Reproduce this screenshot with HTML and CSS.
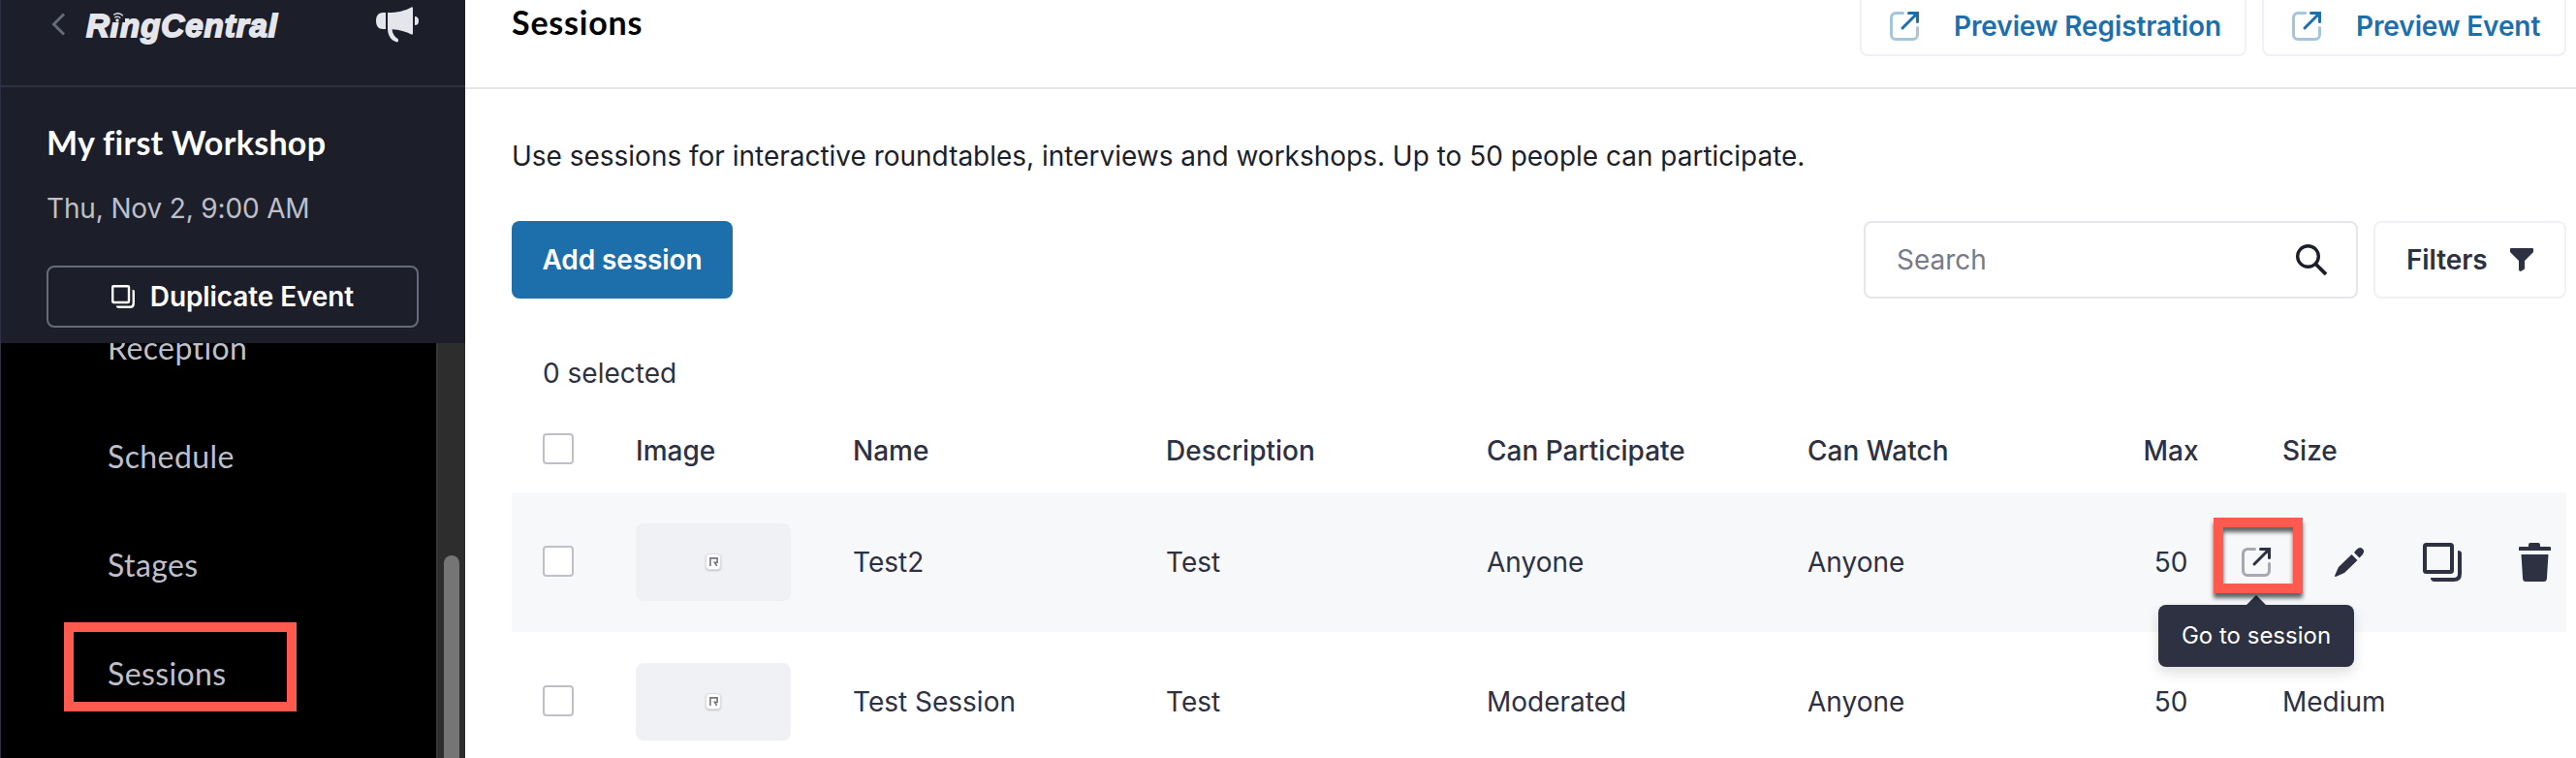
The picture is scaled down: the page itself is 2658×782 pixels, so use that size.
FILE: index.html
```
<!DOCTYPE html>
<html lang="en">
<head>
<meta charset="utf-8">
<title>Sessions</title>
<link rel="stylesheet" href="styles.css">
</head>
<body>
<svg class="defs" width="0" height="0" aria-hidden="true">
  <symbol id="external" viewBox="0 0 30 30">
    <path d="M13.500 1.500H6A4.500 4.500 0 0 0 1.500 6v18A4.500 4.500 0 0 0 6 28.500h18a4.500 4.500 0 0 0 4.500-4.500v-7.500" fill="none" stroke="currentColor" stroke-width="3" stroke-linecap="round" opacity=".4"/>
    <path d="M13 17 27 3" fill="none" stroke="currentColor" stroke-width="3" stroke-linecap="round"/>
    <path d="M19.500 0H30v10.500a1.500 1.500 0 0 1-3 0V6l-3-3h-4.500a1.500 1.500 0 0 1 0-3Z" fill="currentColor"/>
  </symbol>
  <symbol id="copy" viewBox="0 0 40 40">
    <rect x="2" y="2" width="28" height="28" rx="1.500" fill="none" stroke="currentColor" stroke-width="4"/>
    <path d="M36 8q4 0 4 3v21q0 8-8 8H12q-4 0-4-4h24q4 0 4-4Z" fill="currentColor"/>
  </symbol>
</svg>
<div class="app">
  <aside class="sidebar">
    <div class="brand">
      <svg class="back" viewBox="0 0 16 24"><path d="M14 1.500 3.500 12 14 22.500" fill="none" stroke="currentColor" stroke-width="3"/></svg>
      <div class="logo">RingCentral
        <svg class="waves" viewBox="0 0 14 11"><path d="M1 0h13v11H0Z" fill="#1c1f2a"/><circle cx="6" cy="9" r="1.700" fill="#e5e6eb"/><path d="M3.300 6.300q3.200-2.500 6 .4M2.300 3.400q5-3.600 9.600.8" fill="none" stroke="#e5e6eb" stroke-width="1.300"/></svg>
      </div>
      <svg class="horn" viewBox="0 0 44 37"><path d="M10 6v17H7C2.500 23 0 19.500 0 14.500S2.500 6 7 6ZM12 6c10 0 18-2 24.500-5.600Q38 0 38 1.500v26q0 1.500-1.500 1C31 26 24 23.500 16.500 23.300 17 28 19 31 22.500 33q1.500 3-1 3.500C15 34.500 12 29 12 22ZM40 10q4 0 4 4.500T40 19Z" fill="currentColor"/></svg>
    </div>
    <div class="event">
      <h2 class="event-name">My first Workshop</h2>
      <p class="event-date">Thu, Nov 2, 9:00 AM</p>
      <button class="duplicate"><svg class="dup-icon"><use href="#copy"/></svg><span>Duplicate Event</span></button>
    </div>
    <div class="menu">
      <nav class="menu-list">
        <a>Reception</a>
        <a>Schedule</a>
        <a>Stages</a>
        <a class="current">Sessions</a>
      </nav>
      <div class="track"><div class="thumb"></div></div>
    </div>
  </aside>
  <main class="main">
    <header class="topbar">
      <h1 class="title">Sessions</h1>
      <div class="previews">
        <button class="preview registration"><svg><use href="#external"/></svg><span>Preview Registration</span></button>
        <button class="preview"><svg><use href="#external"/></svg><span>Preview Event</span></button>
      </div>
    </header>
    <p class="intro">Use sessions for interactive roundtables, interviews and workshops. Up to 50 people can participate.</p>
    <div class="toolbar">
      <button class="add">Add session</button>
      <div class="search"><span>Search</span>
        <svg viewBox="0 0 32 32"><circle cx="12.500" cy="12.500" r="10.800" fill="none" stroke="currentColor" stroke-width="3.400"/><path d="M20 20l11 11" stroke="currentColor" stroke-width="3.800"/></svg>
      </div>
      <button class="filters"><span>Filters</span>
        <svg viewBox="0 0 24 24"><path d="M1 0h22q1 0 1 1v3L15 13v8.500L11 24q-2 0-2-2v-9L0 4V1q0-1 1-1Z" fill="currentColor"/></svg>
      </button>
    </div>
    <p class="selected">0 selected</p>
    <section class="table">
      <div class="row head">
        <i class="box"></i><span>Image</span><span>Name</span><span>Description</span><span>Can Participate</span><span>Can Watch</span><span class="max">Max</span><span>Size</span>
      </div>
      <div class="row hover">
        <i class="box"></i>
        <div class="image"><span class="chip"><svg viewBox="0 0 10 10"><path d="M1 10V1h8v5H6l2.500 4" fill="none" stroke="currentColor" stroke-width="1.800"/></svg></span></div>
        <span>Test2</span><span>Test</span><span>Anyone</span><span>Anyone</span><span class="max">50</span>
        <div class="actions">
          <div class="go">
            <svg class="go-icon"><use href="#external"/></svg>
            <div class="mark"></div>
            <div class="tooltip">Go to session</div>
          </div>
          <svg class="pencil" viewBox="0 0 30 30"><path d="M17.500 7l6 6L10 26 1 30q-1 0-1-1l4-9ZM20 5l2.500-3q3.500-3.300 6.300-.8t-.3 6.300L25.500 10.500Z" fill="currentColor"/></svg>
          <svg class="copy"><use href="#copy"/></svg>
          <svg class="trash" viewBox="0 0 33 40"><path d="M1 4h9V2q0-2 2-2h8q2 0 2 2v2h10q1 0 1 1v3H0V5q0-1 1-1ZM2.500 12h28l-1.600 25q-.2 3-3 3H7.100q-2.800 0-3-3Z" fill="currentColor"/></svg>
        </div>
      </div>
      <div class="row">
        <i class="box"></i>
        <div class="image"><span class="chip"><svg viewBox="0 0 10 10"><path d="M1 10V1h8v5H6l2.500 4" fill="none" stroke="currentColor" stroke-width="1.800"/></svg></span></div>
        <span>Test Session</span><span>Test</span><span>Moderated</span><span>Anyone</span><span class="max">50</span><span>Medium</span>
      </div>
    </section>
  </main>
</div>
</body>
</html>
```
FILE: styles.css
```
* { box-sizing: border-box; }
body { margin: 0; background: #fff; color: #2d3142; font: 28px/40px Inter, "Liberation Sans", sans-serif; overflow: hidden; }
h1, h2, p { margin: 0; }
button { font: inherit; margin: 0; background: none; cursor: pointer; letter-spacing: -.1px; }
svg { display: block; flex: none; }
.defs { position: absolute; }
.app { display: flex; width: 2658px; height: 782px; overflow: hidden; }

.sidebar { display: flex; flex-direction: column; flex: none; width: 480px; background: #1c1f2a; color: #fff; border-left: 1px solid #2d3142; }
.brand { display: flex; align-items: flex-start; height: 90px; padding: 0 48px 0 51px; border-bottom: 2px solid #2d3142; color: #e5e6eb; }
.back { width: 16px; height: 24px; margin-top: 13px; color: #676a7b; }
.logo { position: relative; margin: 7px 0 0 21px; font: italic 700 33px/40px "Liberation Sans", sans-serif; letter-spacing: 1px; -webkit-text-stroke: 1.800px #e5e6eb; }
.waves { position: absolute; left: 26px; top: 5px; width: 14px; height: 11px; }
.horn { width: 44px; height: 37px; margin: 7px 0 0 auto; }
.event { height: 264px; padding: 35px 48px 0 47px; }
.event-name { font: 700 34px/44px Lato, sans-serif; letter-spacing: .3px; }
.event-date { margin-top: 26px; color: #bfbfc9; letter-spacing: -.15px; }
.duplicate { display: flex; align-items: center; justify-content: center; gap: 16px; width: 384px; height: 64px; margin-top: 39px; border: 2px solid #676a7b; border-radius: 8px; color: #fff; font-weight: 600; }
.dup-icon { width: 24px; height: 24px; }
.menu { display: flex; flex: 1; min-height: 0; overflow: hidden; background: #000; }
.menu-list { display: flex; flex: 1; flex-direction: column; gap: 20px; margin-top: -41px; padding-left: 65px; font: 32px/40px Lato, sans-serif; letter-spacing: .4px; color: #bfbfc9; }
.menu-list a { display: flex; flex: none; align-items: center; width: 240px; height: 92px; padding-left: 45px; }
.menu-list .current { border: 10px solid #ff5a4d; margin-top: -7px; padding-left: 35px; padding-top: 14px; }
.track { width: 30px; padding: 219px 6px 0; background: #2d2d2d; border-left: 2px solid #383838; }
.thumb { height: 300px; border-radius: 8px; background: #757575; }

.main { flex: 1; min-width: 0; }
.topbar { display: flex; justify-content: space-between; align-items: flex-start; height: 92px; padding: 0 10px 0 48px; border-bottom: 2px solid #e5e6eb; }
.title { font: 700 34px/44px Lato, sans-serif; letter-spacing: .8px; color: #000; margin-top: 1px; }
.previews { display: flex; gap: 16px; }
.preview { display: flex; align-items: center; width: 314px; height: 80px; margin-top: -22px; padding: 17px 0 0 29px; gap: 36px; border: 2px solid #f0f1f6; border-radius: 8px; color: #1d6fab; font-weight: 600; white-space: nowrap; }
.preview svg { width: 30px; height: 30px; }
.registration { width: 399px; }
.intro { margin: 49px 0 0 48px; color: #1c1f2a; letter-spacing: -.015px; }
.toolbar { display: flex; margin: 47px 10px 0 48px; height: 80px; }
.add { width: 228px; border: 0; border-radius: 8px; background: #1d6fab; color: #fff; font-weight: 600; }
.search { display: flex; align-items: center; justify-content: space-between; width: 510px; margin-left: auto; padding: 0 30px 0 32px; border: 2px solid #e5e6eb; border-radius: 8px; color: #767a8a; }
.search svg { width: 32px; height: 32px; color: #1c1f2a; }
.filters { display: flex; align-items: center; justify-content: space-between; width: 199px; margin-left: 16px; padding: 0 32px; border: 2px solid #f0f1f6; border-radius: 8px; color: #2d3142; font-weight: 600; }
.filters svg { width: 24px; height: 24px; }
.selected { margin: 57px 0 0 80px; }
.table { margin: 19px 10px 0 48px; }
.row { display: grid; grid-template-columns: 96px 224px 323px 331px 331px 327px 96px 1fr; align-items: center; height: 144px; padding-left: 32px; }
.head { height: 84px; padding-bottom: 2px; font-weight: 500; }
.hover { background: #f7f8fa; }
.box { width: 32px; height: 32px; margin-top: -2px; border: 2px solid #bfbfc9; border-radius: 4px; background: #fff; }
.head .box { margin-top: -4px; }
.max { width: 96px; text-align: center; }
.row > :last-child { padding-left: 67px; }
.image { display: flex; align-items: center; justify-content: center; width: 160px; height: 80px; border-radius: 8px; background: #f0f1f5; }
.chip { display: flex; align-items: center; justify-content: center; width: 16px; height: 17px; margin-top: -1px; border-radius: 4px; background: #fff; border: 1px solid #ddd; color: #777; box-shadow: 0 1px 2px #0003; }
.chip svg { width: 9px; height: 9px; }
.row > .actions { display: flex; align-items: center; padding-left: 25px; }
.go { position: relative; }
.go-icon { width: 30px; height: 30px; }
.mark { position: absolute; left: -29px; top: -31px; width: 92px; height: 78px; border: 10px solid #ff5a4d; filter: drop-shadow(0 5px 2px #0009); z-index: 3; }
.tooltip { position: absolute; left: -86px; top: 59px; width: 202px; height: 64px; border-radius: 8px; background: #2d3142; color: #fff; font-size: 24px; line-height: 64px; text-align: center; box-shadow: 0 6px 14px #0002; z-index: 2; }
.tooltip::before { content: ""; position: absolute; left: 91px; top: -10px; border: solid transparent; border-width: 0 10px 10px; border-bottom-color: #2d3142; }
.pencil { width: 30px; height: 30px; margin-left: 66px; }
.copy { width: 40px; height: 40px; margin-left: 61px; }
.trash { width: 33px; height: 40px; margin-left: 59px; }
```
